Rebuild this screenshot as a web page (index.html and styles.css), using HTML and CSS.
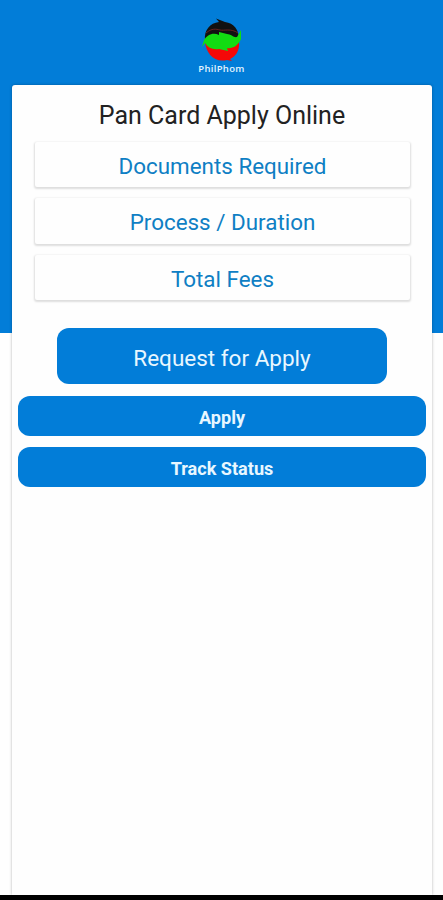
FILE: index.html
```html
<!DOCTYPE html>
<html lang="en">
<head>
    <meta charset="UTF-8">
    <meta name="viewport" content="width=device-width, initial-scale=1.0">
    <title>Pan Card Apply Online</title>
    <link rel="stylesheet" href="styles.css">
</head>
<body>
    <header class="brand">
        <svg class="logo" viewBox="0 0 46 46" aria-hidden="true">
            <path fill="#111" d="M6 22C5 12 11 5 20 4L17 .5L26 4C35 5 40 12 40 21L24 23Z"/>
            <path fill="#f50808" d="M6 24L24 24L40 24C41 33 36 39 31 41L33 43L28 42C15 45 7 35 6 24Z"/>
            <path fill="#12dc12" d="M3 29L5 22C8 17 14 14 20 17L20 14L28 16C32 16 35 20 38 19L42 12L42 21C39 28 33 31 28 30L29 33L20 31C14 32 9 30 6 25Z"/>
            <path fill="none" stroke="#8d2926" stroke-width=".7" d="M7 15C13 10 17 11 21 12S32 10 39 15"/>
        </svg>
        <span class="brand-name">PhilPhom</span>
    </header>

    <main class="card">
        <h1>Pan Card Apply Online</h1>

        <div class="info-list">
            <a class="info-item">Documents Required</a>
            <a class="info-item">Process / Duration</a>
            <a class="info-item">Total Fees</a>
        </div>

        <button class="request-btn">Request for Apply</button>
        <button class="action-btn">Apply</button>
        <button class="action-btn">Track Status</button>
    </main>

    <footer class="nav-bar"></footer>
</body>
</html>
```

FILE: styles.css
```css
* {
    box-sizing: border-box;
}
body {
    margin: 0;
    height: 900px;
    display: flex;
    flex-direction: column;
    font-family: Roboto, sans-serif;
    background: linear-gradient(#027dd8 333px, #fefefe 333px);
    overflow: hidden;
}
.brand {
    height: 85px;
    padding-top: 18px;
    display: flex;
    flex-direction: column;
    align-items: center;
}
.logo {
    width: 46px;
    height: 46px;
}
.brand-name {
    margin-top: -1px;
    font-family: "Open Sans", sans-serif;
    font-size: 9.5px;
    font-weight: 600;
    line-height: 12px;
    letter-spacing: 0.3px;
    color: #e2f5ff;
}
.card {
    flex: 1;
    margin: 0 11px 0 12px;
    padding: 0 6px;
    border-radius: 3px 3px 0 0;
    background-color: #fefefe;
    box-shadow: 0 0 3px rgba(0, 0, 0, 0.3);
}
h1 {
    margin: 0;
    padding-top: 15px;
    height: 57px;
    font-size: 25px;
    font-weight: 400;
    line-height: 32px;
    text-align: center;
    color: #222;
}
.info-list {
    display: flex;
    flex-direction: column;
    gap: 11px;
    margin: 0 16px 0 17px;
}
.info-item {
    height: 45.3px;
    border-radius: 2px;
    font-size: 22.4px;
    line-height: 48px;
    text-align: center;
    color: #0f7fc4;
    background-color: #fefefe;
    box-shadow: 0 1px 2px 1px rgba(0, 0, 0, 0.13);
}
button {
    display: block;
    border: none;
    font-family: inherit;
    color: #e8f7ff;
    background-color: #027dd8;
}
.request-btn {
    width: 330px;
    height: 56.5px;
    margin: 28px auto 12px;
    padding-top: 4px;
    border-radius: 12px;
    font-size: 22.5px;
}
.action-btn {
    width: 100%;
    height: 40px;
    margin-bottom: 11px;
    padding-top: 4px;
    border-radius: 12px;
    font-size: 18.1px;
    font-weight: 700;
}
.nav-bar {
    height: 5px;
    background-color: #000;
}
```
